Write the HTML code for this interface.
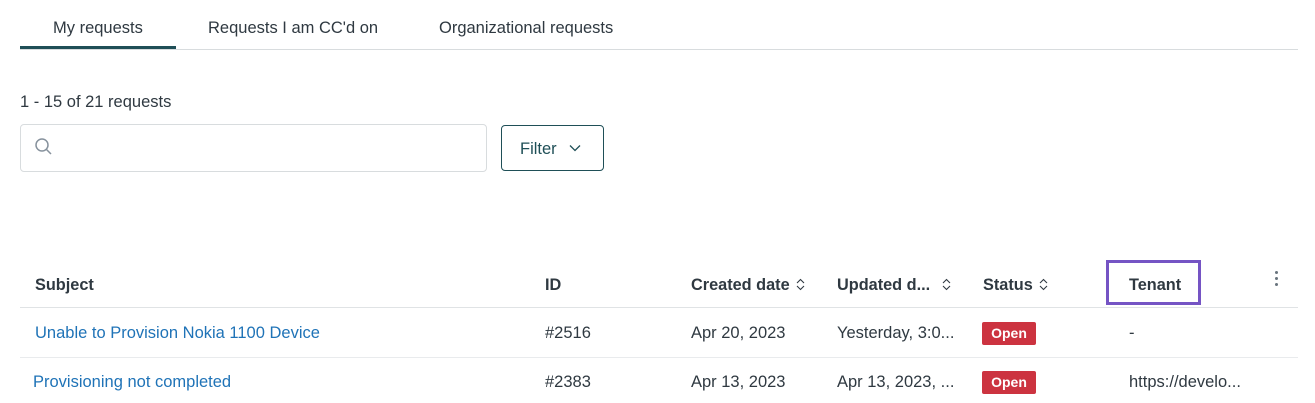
<!DOCTYPE html>
<html><head><style>
body{margin:0;width:1315px;height:403px;background:#fff;font-family:"Liberation Sans",sans-serif;color:#2f3941;position:relative;overflow:hidden}
.a{position:absolute;white-space:nowrap}
.t{font-size:16.5px;top:19px}
.h{font-size:16.3px;font-weight:bold;top:276px;color:#2f3941}
.r{font-size:16.5px}
.lnk{color:#1f73b7}
.badge{position:absolute;background:#cc3340;color:#fff;font-weight:bold;font-size:14px;border-radius:2px;width:54px;height:23px;line-height:23px;text-align:center}
.sort{display:inline-block;margin-left:6px;vertical-align:-1px}
</style></head><body>
<div class="a t" style="left:53px">My requests</div>
<div class="a t" style="left:208px">Requests I am CC'd on</div>
<div class="a t" style="left:439px">Organizational requests</div>
<div class="a" style="left:20px;top:49px;width:1278px;height:1px;background:#d8dcde"></div>
<div class="a" style="left:20px;top:46px;width:156px;height:3px;background:#1f4f57"></div>
<div class="a" style="left:20px;top:93px;font-size:16.5px">1 - 15 of 21 requests</div>
<div class="a" style="left:20px;top:124px;width:465px;height:46px;border:1px solid #d8dcde;border-radius:4px"></div>
<svg class="a" style="left:34px;top:137px" width="20" height="20" viewBox="0 0 20 20"><circle cx="8" cy="8" r="6" fill="none" stroke="#87929d" stroke-width="1.5"/><line x1="12.5" y1="12.5" x2="17" y2="17" stroke="#87929d" stroke-width="1.5"/></svg>
<div class="a" style="left:501px;top:125px;width:101px;height:44px;border:1px solid #1f4f57;border-radius:4px"></div>
<div class="a" style="left:520px;top:140px;font-size:16.5px;color:#1f4f57">Filter</div>
<svg class="a" style="left:569px;top:144px" width="12" height="8" viewBox="0 0 12 8"><path d="M1 1.5L6 6.5L11 1.5" fill="none" stroke="#1f4f57" stroke-width="1.3"/></svg>

<div class="a h" style="left:35px">Subject</div>
<div class="a h" style="left:545px">ID</div>
<div class="a h" style="left:691px">Created date<svg class="sort" width="9" height="13" viewBox="0 0 9 13"><path d="M1 5L4.5 1.5L8 5M1 8L4.5 11.5L8 8" fill="none" stroke="#2f3941" stroke-width="1.1"/></svg></div>
<div class="a h" style="left:837px">Updated d...<svg class="sort" style="margin-left:12px" width="9" height="13" viewBox="0 0 9 13"><path d="M1 5L4.5 1.5L8 5M1 8L4.5 11.5L8 8" fill="none" stroke="#2f3941" stroke-width="1.1"/></svg></div>
<div class="a h" style="left:983px">Status<svg class="sort" width="9" height="13" viewBox="0 0 9 13"><path d="M1 5L4.5 1.5L8 5M1 8L4.5 11.5L8 8" fill="none" stroke="#2f3941" stroke-width="1.1"/></svg></div>
<div class="a" style="left:1106px;top:260px;width:89px;height:39px;border:3px solid #7554c4"></div>
<div class="a h" style="left:1129px">Tenant</div>
<div class="a" style="left:1275px;top:271px;width:3px;height:3px;border-radius:50%;background:#68737d;box-shadow:0 6px 0 #68737d,0 12px 0 #68737d"></div>
<div class="a" style="left:20px;top:307px;width:1278px;height:1px;background:#e0e3e5"></div>

<div class="a r lnk" style="left:35px;top:324px">Unable to Provision Nokia 1100 Device</div>
<div class="a r" style="left:545px;top:324px">#2516</div>
<div class="a r" style="left:691px;top:324px">Apr 20, 2023</div>
<div class="a r" style="left:837px;top:324px">Yesterday, 3:0...</div>
<div class="badge" style="left:982px;top:322px">Open</div>
<div class="a r" style="left:1129px;top:324px">-</div>
<div class="a" style="left:20px;top:357px;width:1278px;height:1px;background:#e9ebed"></div>

<div class="a r lnk" style="left:33px;top:373px">Provisioning not completed</div>
<div class="a r" style="left:545px;top:373px">#2383</div>
<div class="a r" style="left:691px;top:373px">Apr 13, 2023</div>
<div class="a r" style="left:837px;top:373px">Apr 13, 2023, ...</div>
<div class="badge" style="left:982px;top:371px">Open</div>
<div class="a r" style="left:1129px;top:373px">https://develo...</div>
</body></html>
